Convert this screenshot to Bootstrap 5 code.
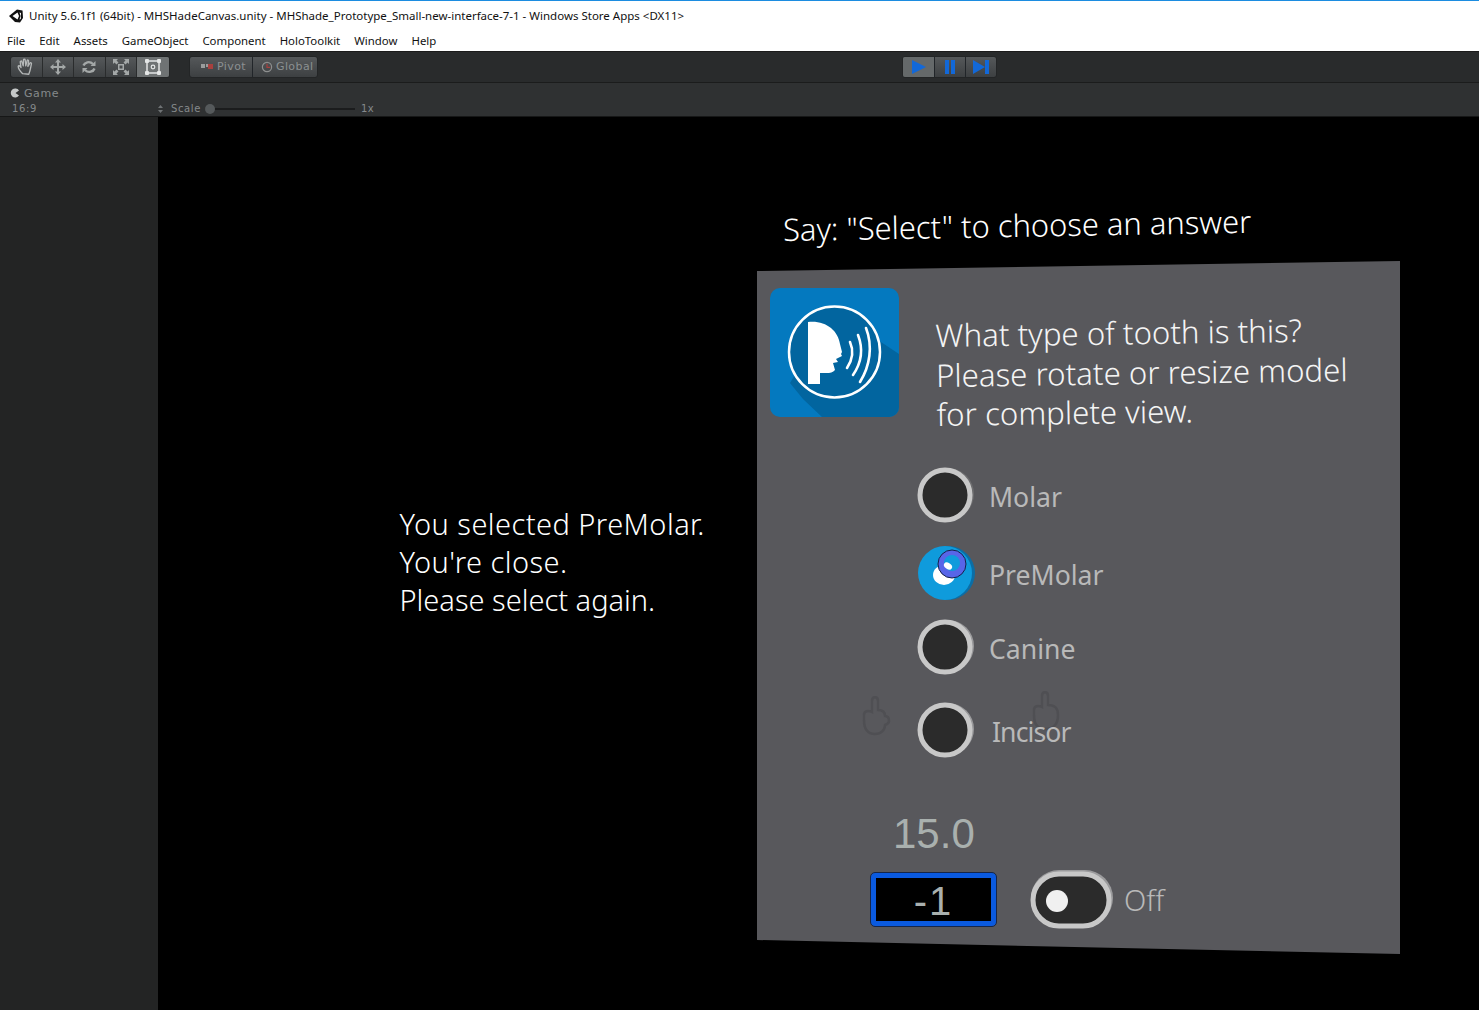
<!DOCTYPE html>
<html lang="en">
<head>
    <meta charset="UTF-8">
    <title>Unity 5.6.1f1 (64bit) - MHSHadeCanvas.unity</title>
    <link rel="stylesheet" href="https://cdn.jsdelivr.net/npm/bootstrap@5.3.0/dist/css/bootstrap.min.css">
    <script src="https://cdn.jsdelivr.net/npm/bootstrap@5.3.0/dist/js/bootstrap.bundle.min.js"></script>
    <style>
        html, body { height: 100%; }
        body { background: #000; overflow: hidden; font-family: "Noto Sans", "Liberation Sans", sans-serif; }
        .app { height: 1010px; width: 1479px; }

        .title-bar { height: 31px; background: #fff; border-top: 1px solid #1c8ce0; padding-left: 8px; font: 11.5px/28px "Noto Sans", sans-serif; color: #111; gap: 5px; }
        .menu-bar { height: 20px; background: #fff; padding-left: 7px; gap: 14px; font: 11.4px/20px "Noto Sans", sans-serif; color: #111; }
        .tool-bar { height: 32px; background: #292b2c; border-top: 1px solid #1b1b1b; border-bottom: 1px solid #1b1c1c; padding-left: 10px; }
        .tool-group { height: 22px; border-radius: 3px; background: linear-gradient(#55585a, #3d4042); border: 1px solid #232526; overflow: hidden; }
        .tool-btn { width: 31.6px; border-right: 1px solid #2a2c2d; }
        .tool-btn:last-child { border-right: 0; }
        .tool-btn.is-on { background: #6f7374; }
        .tool-txt { font: 11px/20px "DejaVu Sans", sans-serif; color: #8b9092; letter-spacing: .4px; padding: 0 6px 0 10px; gap: 3px; }
        .tool-txt-end { padding: 0 4px 0 8px; }
        .pivot-group { margin-left: 19px; }
        .play-group { margin-left: 584px; width: 95px; }
        .play-btn { flex: 1 1 0; }
        .play-btn.is-on { background: #65696a; }

        .game-head { height: 34px; background: #2f3132; color: #85898b; font: 10px/1 "DejaVu Sans", sans-serif; letter-spacing: .6px; border-bottom: 1px solid #161717; }
        .game-tab { height: 18px; padding: 2px 0 0 10px; gap: 4px; font-size: 11px; }
        .game-opts { height: 15px; padding-top: 1px; }
        .aspect { width: 163px; padding: 0 0 0 12px; }
        .scale-track { width: 150px; height: 2px; background: #1b1c1d; position: relative; margin: 0 6px 0 4px; }
        .scale-knob { position: absolute; left: 0; top: -4px; width: 10px; height: 10px; border-radius: 50%; background: #55595b; }

        .game-body { height: 893px; }
        .side-strip { width: 158px; background: #232424; }
        .game-view { position: relative; background: #000; color: #fff; }

        .feedback { position: absolute; left: 241.5px; top: 388px; font-size: 29px; line-height: 38px; font-weight: 300; white-space: nowrap; }
        .fb-wide { letter-spacing: .45px; }
        .say-line { position: absolute; left: 625px; top: 92px; font-size: 30.9px; font-weight: 300; line-height: 40px; white-space: nowrap; transform: rotate(-1deg); transform-origin: left center; }

        .quiz-panel { position: absolute; left: 599px; top: 144px; width: 644px; height: 693px; background: #58585c; clip-path: polygon(0 10px, 643px 0, 643px 693px, 0 679px); padding: 27px 0 0 13px; }
        .quiz-icon { width: 129px; height: 129px; flex: none; }
        .question { margin: 28px 0 0 37px; color: #f4f4f4; font-size: 31.2px; line-height: 39.5px; font-weight: 300; white-space: nowrap; transform: rotate(-.8deg); transform-origin: left center; }
        .answer { margin-left: 147px; color: #b9b9b9; font-size: 26.6px; line-height: 1; gap: 14px; position: relative; z-index: 1; }
        .answer span { padding-top: 5px; }
        .answer-a { margin-top: 32px; }
        .answer-b { margin-top: 22px; }
        .answer-c { margin-top: 18px; }
        .answer-d { margin-top: 27px; }
        .incisor-txt { margin-left: 3px; letter-spacing: -.9px; }
        .radio-dot { width: 58px; height: 56px; flex: none; display: block; }
        .timer { margin: 55px 0 0 123px; font: 42px/1 "Liberation Sans", sans-serif; color: #a9b0ae; }
        .bottom-row { margin: 15px 0 0 101px; }
        .num-box { width: 125px; height: 53px; background: #000; border: 5px solid #0a5ae0; outline: 1px solid #15264a; border-radius: 4px; color: #a9b0ae; font: 40px/46px "Liberation Sans", sans-serif; letter-spacing: 2px; text-align: center; }
        .toggle-track { width: 83px; height: 60px; margin-left: 34px; flex: none; display: block; }
        .off-label { color: #b9b9b9; font-size: 29px; font-weight: 300; margin-left: 11px; line-height: 1; }
        .ghost-hand { position: absolute; width: 30px; height: 40px; }
    </style>
</head>
<body>
<div class="app d-flex flex-column">
    <div class="title-bar d-flex align-items-center">
        <svg width="16" height="16" viewBox="0 0 16 16"><path d="M1 8 9 1.500 14.500 2.500 15 10 12 14.500 7 14 Z" fill="#111"/><path d="M4.500 8 9.500 4.500 11 8 9.500 11.500Z M11.500 4.500 12.500 8 11.500 11.500 12.800 11 13 5Z" fill="#fff"/></svg>
        <span>Unity 5.6.1f1 (64bit) - MHSHadeCanvas.unity - MHShade_Prototype_Small-new-interface-7-1 - Windows Store Apps &lt;DX11&gt;</span>
    </div>
    <div class="menu-bar d-flex">
        <span>File</span><span>Edit</span><span>Assets</span><span>GameObject</span><span>Component</span><span>HoloToolkit</span><span>Window</span><span>Help</span>
    </div>
    <div class="tool-bar d-flex align-items-center">
        <div class="tool-group d-flex">
            <div class="tool-btn d-flex align-items-center justify-content-center">
                <svg width="20" height="20" viewBox="0 0 18 18" fill="none" stroke="#b5b8b8" stroke-width="1.200" stroke-linejoin="round" stroke-linecap="round"><path d="M6 15C4 13 2 10 2 8.500 2 7.500 3.500 7.500 4.500 9.500L3.800 4.500C3.700 3.500 5 3.300 5.300 4.300L6.500 8 6.700 2.800C6.800 1.800 8.200 1.800 8.300 2.800L8.800 8 10 3.300C10.300 2.300 11.500 2.700 11.300 3.700L10.700 8.500 12.500 5.500C13 4.700 14.200 5.200 13.900 6.200 13.200 9 13 12 11.500 15.500Z"/></svg>
            </div>
            <div class="tool-btn d-flex align-items-center justify-content-center">
                <svg width="16" height="16" viewBox="0 0 16 16" fill="#a4a8a8"><path d="M8 0 11 3.500H9V7H12.500V5L16 8 12.500 11V9H9V12.500H11L8 16 5 12.500H7V9H3.500V11L0 8 3.500 5V7H7V3.500H5Z"/></svg>
            </div>
            <div class="tool-btn d-flex align-items-center justify-content-center">
                <svg width="16" height="16" viewBox="0 0 16 16" fill="none" stroke="#a4a8a8" stroke-width="2.400"><path d="M2.500 6.500C3.500 3.500 8.500 1.500 12 5"/><path d="M13.500 9.500C12.500 12.500 7.500 14.500 4 11"/><path d="M14.500 2V7H9.500Z M1.500 14V9H6.500Z" fill="#a4a8a8" stroke="none"/></svg>
            </div>
            <div class="tool-btn d-flex align-items-center justify-content-center">
                <svg width="18" height="18" viewBox="0 0 18 18" fill="#a4a8a8"><path d="M6 6H12V12H6ZM7.500 7.500V10.500H10.500V7.500Z" fill-rule="evenodd"/><path d="M1 1H6L4.500 2.500 6.500 4.500 4.500 6.500 2.500 4.500 1 6Z M17 1V6L15.500 4.500 13.500 6.500 11.500 4.500 13.500 2.500 12 1Z M1 17V12L2.500 13.500 4.500 11.500 6.500 13.500 4.500 15.500 6 17Z M17 17H12L13.500 15.500 11.500 13.500 13.500 11.500 15.500 13.500 17 12Z"/></svg>
            </div>
            <div class="tool-btn is-on d-flex align-items-center justify-content-center">
                <svg width="18" height="18" viewBox="0 0 18 18" fill="#e4e6e6"><path d="M3 3H15V15H3Z" fill="none" stroke="#e4e6e6" stroke-width="1.500"/><rect x="1" y="1" width="4" height="4" rx="1"/><rect x="13" y="1" width="4" height="4" rx="1"/><rect x="1" y="13" width="4" height="4" rx="1"/><rect x="13" y="13" width="4" height="4" rx="1"/><circle cx="9" cy="9" r="1.800" fill="none" stroke="#e4e6e6" stroke-width="1.200"/></svg>
            </div>
        </div>
        <div class="tool-group pivot-group d-flex">
            <div class="tool-txt d-flex align-items-center border-end border-dark">
                <svg width="14" height="10" viewBox="0 0 14 10"><rect x="1" y="2" width="4" height="4" fill="#9a9c9c"/><rect x="6" y="2" width="2" height="3" fill="#9a9c9c"/><rect x="8" y="2" width="5" height="5" fill="#a8403e"/></svg>
                <span>Pivot</span>
            </div>
            <div class="tool-txt tool-txt-end d-flex align-items-center">
                <svg width="12" height="12" viewBox="0 0 13 13" fill="none" stroke="#8d8f8f" stroke-width="1.300"><circle cx="6.500" cy="6.500" r="5"/><path d="M6.500 3V7H10" stroke="#a8403e"/></svg>
                <span>Global</span>
            </div>
        </div>
        <div class="tool-group play-group d-flex">
            <div class="play-btn is-on d-flex align-items-center justify-content-center border-end border-dark">
                <svg width="16" height="16" viewBox="0 0 16 16"><path d="M1 1 15 8 1 15Z" fill="#1268d8"/></svg>
            </div>
            <div class="play-btn d-flex align-items-center justify-content-center border-end border-dark">
                <svg width="12" height="16" viewBox="0 0 12 16"><rect x="1" y="1" width="4" height="14" fill="#1268d8"/><rect x="7" y="1" width="4" height="14" fill="#1268d8"/></svg>
            </div>
            <div class="play-btn d-flex align-items-center justify-content-center">
                <svg width="16" height="16" viewBox="0 0 16 16"><path d="M0 1 12 8 0 15Z" fill="#1268d8"/><rect x="12" y="1" width="4" height="14" fill="#1268d8"/></svg>
            </div>
        </div>
    </div>
    <div class="game-head">
        <div class="game-tab d-flex align-items-center">
            <svg width="10" height="10" viewBox="0 0 10 10"><path d="M9 2.500A4.500 4.500 0 1 0 9 7.500L5.500 5Z" fill="#c5c8c8"/></svg>
            <span>Game</span>
        </div>
        <div class="game-opts d-flex align-items-center">
            <div class="aspect d-flex justify-content-between align-items-center">
                <span>16:9</span>
                <svg width="5" height="8" viewBox="0 0 5 8" fill="#6f7375"><path d="M2.500 0 5 3H0Z M2.500 8 0 5H5Z"/></svg>
            </div>
            <span class="ms-2">Scale</span>
            <div class="scale-track"><div class="scale-knob"></div></div>
            <span>1x</span>
        </div>
    </div>
    <div class="game-body d-flex">
        <div class="side-strip"></div>
        <div class="game-view flex-grow-1">
            <div class="feedback"><span class="fb-wide">You selected PreMolar.</span><br><span class="fb-wide">You're close.</span><br>Please select again.</div>
            <div class="say-line">Say: "Select" to choose an answer</div>

            <div class="quiz-panel">
                <div class="d-flex">
                    <svg class="quiz-icon" viewBox="0 0 129 129">
                        <rect width="129" height="129" rx="10" fill="#0479bf"/>
                        <path d="M33 111 20 95 65 20 108 52 129 66V119A10 10 0 0 1 119 129H52Z" fill="#02659f"/>
                        <circle cx="64.500" cy="64" r="45.500" fill="#02659f" stroke="#fff" stroke-width="2.500"/>
                        <path d="M38 34C55 32 68 42 70 56L72 64 71 66 72 68 66 71 68 74 63 75 65 82C62 86 57 85 50 85V96H38Z" fill="#fff"/>
                        <g fill="none" stroke="#fff" stroke-width="2.600" stroke-linecap="round"><path d="M80 54C84 63 83 71 77 80"/><path d="M88 47C93 60 92 74 83 87"/><path d="M96 40C103 58 100 78 90 94"/></g>
                    </svg>
                    <div class="question">What type of tooth is this?<br>Please rotate or resize model<br>for complete view.</div>
                </div>

                <div class="answer answer-a d-flex align-items-center">
                    <svg class="radio-dot" viewBox="0 0 58 56"><circle cx="31" cy="27" r="26" fill="#6e6e70"/><circle cx="28" cy="28" r="25" fill="#2b2b2b" stroke="#c8c8c8" stroke-width="5"/></svg>
                    <span>Molar</span>
                </div>
                <div class="answer answer-b d-flex align-items-center">
                    <svg class="radio-dot" viewBox="0 0 58 56"><circle cx="31" cy="28" r="27" fill="#0b6ea6"/><circle cx="28" cy="28" r="27" fill="#0f9bdc"/><ellipse cx="27" cy="30" rx="11" ry="10" fill="#fff"/><circle cx="35" cy="19" r="14" fill="#5865e8" stroke="#15204a" stroke-width="1"/><circle cx="35" cy="18" r="8" fill="#0f9bdc"/><ellipse cx="31" cy="21" rx="4.500" ry="3" fill="#fff" transform="rotate(35 31 21)"/></svg>
                    <span>PreMolar</span>
                </div>
                <div class="answer answer-c d-flex align-items-center">
                    <svg class="radio-dot" viewBox="0 0 58 56"><circle cx="31" cy="27" r="26" fill="#9a9a9c"/><circle cx="28" cy="28" r="25" fill="#2b2b2b" stroke="#c8c8c8" stroke-width="5"/></svg>
                    <span>Canine</span>
                </div>
                <div class="answer answer-d d-flex align-items-center">
                    <svg class="radio-dot" viewBox="0 0 58 56"><circle cx="31" cy="27" r="26" fill="#9a9a9c"/><circle cx="28" cy="28" r="25" fill="#2b2b2b" stroke="#c8c8c8" stroke-width="5"/></svg>
                    <span class="incisor-txt">Incisor</span>
                </div>

                <div class="timer">15.0</div>
                <div class="bottom-row d-flex align-items-center">
                    <div class="num-box">-1</div>
                    <svg class="toggle-track" viewBox="0 0 83 60"><rect x="1" y="0" width="82" height="56" rx="28" fill="#9b9b9d"/><rect x="3" y="4" width="76" height="52" rx="26" fill="#2b2b2b" stroke="#c8c8c8" stroke-width="5"/><circle cx="27" cy="31" r="11" fill="#f0f0f0"/></svg>
                    <span class="off-label">Off</span>
                </div>

                <svg class="ghost-hand" style="left:104px;top:435px" viewBox="0 0 30 40" fill="none" stroke="#4f4f53" stroke-width="2.500"><path d="M11 16V5C11 0 17 0 17 5V14C22 14 24 16 24 20 27 20 28 22 28 25 28 27 27 28 24 29 24 34 20 38 14 38 6 38 3 33 3 24V19C3 15 7 14 11 16Z"/></svg>
                <svg class="ghost-hand" style="left:274px;top:430px" viewBox="0 0 30 40" fill="none" stroke="#4f4f53" stroke-width="2.500"><path d="M11 16V5C11 0 17 0 17 5V14C24 14 27 17 27 24 27 34 22 38 14 38 6 38 3 33 3 24V19C3 15 7 14 11 16Z"/></svg>
            </div>
        </div>
    </div>
</div>
</body>
</html>
